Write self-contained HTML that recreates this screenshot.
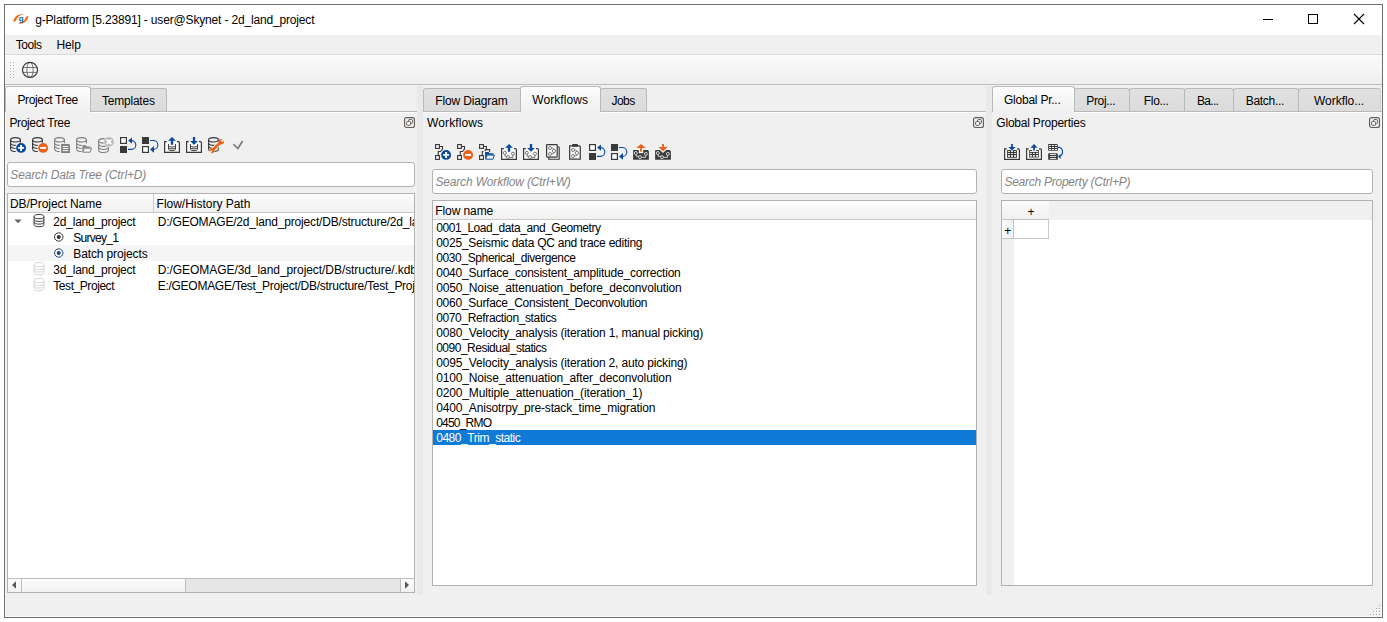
<!DOCTYPE html>
<html><head><meta charset="utf-8"><title>g-Platform</title>
<style>
html,body{margin:0;padding:0;background:#fff;}
body{width:1387px;height:622px;position:relative;overflow:hidden;font-family:'Liberation Sans',sans-serif;font-size:12px;}
.a{position:absolute;box-sizing:border-box;}
.t{position:absolute;white-space:pre;line-height:14px;font-size:12px;}
#win{left:4px;top:4px;width:1379px;height:614px;border:1px solid #707070;background:#f0f0f0;}
#title{left:5px;top:5px;width:1377px;height:30px;background:#fff;}
#menubar{left:5px;top:35px;width:1377px;height:20px;background:#f0f0f0;border-bottom:1px solid #dadada;}
#toolbar{left:5px;top:55px;width:1377px;height:30px;background:linear-gradient(#fbfbfb,#efefef);border-bottom:1px solid #bdbdbd;}
.pane-line{height:1px;background:#b9b9b9;}
.tab{border:1px solid #b9b9b9;border-bottom:none;border-radius:3px 3px 0 0;background:linear-gradient(#e1e1e1,#dbdbdb);}
.tab.sel{background:linear-gradient(#fcfcfc,#f0f0f0);}
.split{background:#e9e9e9;}
.edit{border:1px solid #b2b2b2;border-radius:3px;background:#fff;}
.view{border:1px solid #b2b2b2;background:#fff;}
.hdr{background:linear-gradient(#fdfdfd,#f0f0f0);border-bottom:1px solid #c9c9c9;}
.pane-hl{height:1px;background:#fdfdfd;}
.sbtn{background:linear-gradient(#fdfdfd,#f1f1f1);}
svg{position:absolute;overflow:visible;}

</style></head><body>
<div id="win" class="a"></div>
<div id="title" class="a"></div>
<div id="menubar" class="a"></div>
<div id="toolbar" class="a"></div>

<!-- window controls -->
<svg style="left:1258px;top:9px" width="120" height="20" viewBox="0 0 120 20">
 <path d="M5 10.5H15" stroke="#000" stroke-width="1" fill="none"/>
 <rect x="50.5" y="5.5" width="9" height="9" stroke="#000" stroke-width="1" fill="none"/>
 <path d="M96 5L106 15M106 5L96 15" stroke="#000" stroke-width="1.1" fill="none"/>
</svg>

<!-- inner light edges -->
<div class="a" style="left:5px;top:112px;width:1px;height:505px;background:#f7f7f7"></div>
<div class="a" style="left:1381px;top:112px;width:1px;height:505px;background:#f7f7f7"></div>
<div class="a" style="left:5px;top:616px;width:1377px;height:1px;background:#f7f7f7"></div>
<!-- splitters -->
<div class="a split" style="left:417px;top:86px;width:6px;height:509px"></div>
<div class="a split" style="left:986px;top:86px;width:6px;height:509px"></div>

<!-- LEFT PANEL -->
<div class="a pane-line" style="left:5px;top:111px;width:412px"></div>
<div class="a pane-hl" style="left:90px;top:112px;width:327px"></div>
<div class="a tab" style="left:90px;top:88px;width:77px;height:23px"></div>
<div class="a tab sel" style="left:5px;top:86px;width:86px;height:26px"></div>
<div class="a edit" style="left:7px;top:162px;width:408px;height:25px"></div>
<div class="a view" style="left:7px;top:193px;width:408px;height:400px"></div>
<div class="a hdr" style="left:8px;top:194px;width:406px;height:19px"></div>
<div class="a" style="left:153px;top:194px;width:1px;height:18px;background:#cfcfcf"></div>
<div class="a" style="left:8px;top:245px;width:406px;height:16px;background:#f5f5f5"></div>
<!-- hscroll -->
<div class="a" style="left:8px;top:578px;width:406px;height:14px;background:#e6e6e6;border-top:1px solid #bdbdbd"></div>
<div class="a sbtn" style="left:8px;top:579px;width:14px;height:13px;border-right:1px solid #bdbdbd"></div>
<div class="a sbtn" style="left:21px;top:579px;width:165px;height:13px;border-left:1px solid #bdbdbd;border-right:1px solid #bdbdbd"></div>
<div class="a sbtn" style="left:400px;top:579px;width:14px;height:13px;border-left:1px solid #bdbdbd"></div>
<svg style="left:11px;top:581px" width="6" height="8" viewBox="0 0 6 8"><path d="M1 4L5 0.3V7.7Z" fill="#5a5a5a"/></svg>
<svg style="left:404px;top:581px" width="6" height="8" viewBox="0 0 6 8"><path d="M5 4L1 0.3V7.7Z" fill="#5a5a5a"/></svg>

<!-- MIDDLE PANEL -->
<div class="a pane-line" style="left:423px;top:111px;width:563px"></div>
<div class="a pane-hl" style="left:423px;top:112px;width:98px"></div>
<div class="a pane-hl" style="left:601px;top:112px;width:385px"></div>
<div class="a tab" style="left:423px;top:88px;width:99px;height:23px"></div>
<div class="a tab" style="left:600px;top:88px;width:47px;height:23px"></div>
<div class="a tab sel" style="left:520px;top:86px;width:81px;height:26px"></div>
<div class="a edit" style="left:432px;top:169px;width:545px;height:25px"></div>
<div class="a view" style="left:432px;top:200px;width:545px;height:386px"></div>
<div class="a hdr" style="left:433px;top:201px;width:543px;height:19px"></div>
<div class="a" style="left:433px;top:430px;width:543px;height:15px;background:#0f7bd7"></div>

<!-- RIGHT PANEL -->
<div class="a pane-line" style="left:992px;top:111px;width:390px"></div>
<div class="a pane-hl" style="left:1075px;top:112px;width:307px"></div>
<div class="a tab" style="left:1074px;top:88px;width:56px;height:23px"></div>
<div class="a tab" style="left:1129px;top:88px;width:56px;height:23px"></div>
<div class="a tab" style="left:1184px;top:88px;width:50px;height:23px"></div>
<div class="a tab" style="left:1233px;top:88px;width:66px;height:23px"></div>
<div class="a tab" style="left:1298px;top:88px;width:83px;height:23px;border-right-color:#d2d2d2"></div>
<div class="a tab sel" style="left:992px;top:86px;width:83px;height:26px"></div>
<div class="a edit" style="left:1001px;top:169px;width:372px;height:25px"></div>
<div class="a view" style="left:1001px;top:200px;width:372px;height:386px"></div>
<div class="a" style="left:1002px;top:201px;width:370px;height:19px;background:#f0f0f0"></div>
<div class="a" style="left:1002px;top:201px;width:47px;height:19px;background:linear-gradient(#fbfbfb,#f0f0f0);border-bottom:1px solid #c2c2c2"></div>
<div class="a" style="left:1002px;top:220px;width:12px;height:365px;background:#f0f0f0"></div>
<div class="a" style="left:1002px;top:220px;width:12px;height:19px;background:linear-gradient(90deg,#fbfbfb,#f0f0f0);border-right:1px solid #c2c2c2;border-bottom:1px solid #c2c2c2"></div>
<div class="a" style="left:1014px;top:220px;width:35px;height:19px;background:#fff;border-right:1px solid #c8c8c8;border-bottom:1px solid #c8c8c8"></div>

<!-- float buttons -->
<svg style="left:404px;top:117px" width="11" height="11" viewBox="0 0 11 11"><rect x="0.55" y="0.55" width="9.9" height="9.9" rx="2" fill="none" stroke="#625e5a" stroke-width="1.15"/><rect x="4.5" y="2.5" width="4" height="4" rx="1.2" fill="none" stroke="#625e5a" stroke-width="1"/><rect x="2.6" y="4.4" width="4" height="4" rx="1.2" fill="#f6f6f6" stroke="#625e5a" stroke-width="1"/></svg>
<svg style="left:973px;top:117px" width="11" height="11" viewBox="0 0 11 11"><rect x="0.55" y="0.55" width="9.9" height="9.9" rx="2" fill="none" stroke="#625e5a" stroke-width="1.15"/><rect x="4.5" y="2.5" width="4" height="4" rx="1.2" fill="none" stroke="#625e5a" stroke-width="1"/><rect x="2.6" y="4.4" width="4" height="4" rx="1.2" fill="#f6f6f6" stroke="#625e5a" stroke-width="1"/></svg>
<svg style="left:1369px;top:117px" width="11" height="11" viewBox="0 0 11 11"><rect x="0.55" y="0.55" width="9.9" height="9.9" rx="2" fill="none" stroke="#625e5a" stroke-width="1.15"/><rect x="4.5" y="2.5" width="4" height="4" rx="1.2" fill="none" stroke="#625e5a" stroke-width="1"/><rect x="2.6" y="4.4" width="4" height="4" rx="1.2" fill="#f6f6f6" stroke="#625e5a" stroke-width="1"/></svg>

<!-- size grip -->
<svg style="left:1370px;top:605px" width="11" height="11" viewBox="0 0 11 11" shape-rendering="crispEdges"><g fill="#a6a6a6"><rect x="9" y="0" width="1" height="1"/><rect x="6" y="3" width="1" height="1"/><rect x="9" y="3" width="1" height="1"/><rect x="3" y="6" width="1" height="1"/><rect x="6" y="6" width="1" height="1"/><rect x="9" y="6" width="1" height="1"/><rect x="0" y="9" width="1" height="1"/><rect x="3" y="9" width="1" height="1"/><rect x="6" y="9" width="1" height="1"/><rect x="9" y="9" width="1" height="1"/></g><g fill="#fff"><rect x="10" y="1" width="1" height="1"/><rect x="7" y="4" width="1" height="1"/><rect x="10" y="4" width="1" height="1"/><rect x="4" y="7" width="1" height="1"/><rect x="7" y="7" width="1" height="1"/><rect x="10" y="7" width="1" height="1"/><rect x="1" y="10" width="1" height="1"/><rect x="4" y="10" width="1" height="1"/><rect x="7" y="10" width="1" height="1"/><rect x="10" y="10" width="1" height="1"/></g></svg>
<svg style="left:10px;top:137px" width="16" height="16" viewBox="0 0 16 16"><g fill="none" stroke="#3a3a3a" stroke-width="1.1"><ellipse cx="5.5" cy="2.85" rx="4.9" ry="2.2"/><path d="M0.6 2.85V12.35"/><path d="M10.4 2.85V6.4"/><path d="M0.6 6.15A4.9 2.2 0 0 0 5.7 8.350000000000001"/><path d="M0.6 9.25A4.9 2.2 0 0 0 5.7 11.45"/><path d="M0.6 12.35A4.9 2.2 0 0 0 5.7 14.55"/></g><circle cx="11.1" cy="10.9" r="5.5" fill="#f0f0f0"/><circle cx="11.1" cy="10.9" r="4.95" fill="#0a4b9c"/><path d="M8.1 10.9H14.1M11.1 7.9V13.9" stroke="#fff" stroke-width="1.9"/></svg>
<svg style="left:32px;top:137px" width="16" height="16" viewBox="0 0 16 16"><g fill="none" stroke="#3a3a3a" stroke-width="1.1"><ellipse cx="5.5" cy="2.85" rx="4.9" ry="2.2"/><path d="M0.6 2.85V12.35"/><path d="M10.4 2.85V6.4"/><path d="M0.6 6.15A4.9 2.2 0 0 0 5.7 8.350000000000001"/><path d="M0.6 9.25A4.9 2.2 0 0 0 5.7 11.45"/><path d="M0.6 12.35A4.9 2.2 0 0 0 5.7 14.55"/></g><circle cx="11.1" cy="10.9" r="5.5" fill="#f0f0f0"/><circle cx="11.1" cy="10.9" r="4.95" fill="#e8641a"/><path d="M8.1 10.9H14.1" stroke="#fff" stroke-width="1.9"/></svg>
<svg style="left:54px;top:137px" width="16" height="16" viewBox="0 0 16 16"><g fill="none" stroke="#808080" stroke-width="1.1"><ellipse cx="5.5" cy="2.85" rx="4.9" ry="2.2"/><path d="M0.6 2.85V12.35"/><path d="M10.4 2.85V6.4"/><path d="M0.6 6.15A4.9 2.2 0 0 0 5.7 8.350000000000001"/><path d="M0.6 9.25A4.9 2.2 0 0 0 5.7 11.45"/><path d="M0.6 12.35A4.9 2.2 0 0 0 5.7 14.55"/></g><path d="M6.6 6.6H15.2L16.5 7.9V16.4H6.6Z" fill="#f0f0f0"/><path d="M7.1 7.1H14.9L16 8.2V15.9H7.1Z" fill="#7f7f7f"/><path d="M8.8 9.5H14.3M8.8 11.5H14.3M8.8 13.6H14.3" stroke="#fff" stroke-width="1"/></svg>
<svg style="left:76px;top:137px" width="16" height="16" viewBox="0 0 16 16"><g fill="none" stroke="#808080" stroke-width="1.1"><ellipse cx="5.5" cy="2.85" rx="4.9" ry="2.2"/><path d="M0.6 2.85V12.35"/><path d="M10.4 2.85V6.4"/><path d="M0.6 6.15A4.9 2.2 0 0 0 5.7 8.350000000000001"/><path d="M0.6 9.25A4.9 2.2 0 0 0 5.7 11.45"/><path d="M0.6 12.35A4.9 2.2 0 0 0 5.7 14.55"/></g><path d="M5.9 16.2V7.7H10.2L11.2 8.9H14.9V10.3H16.6L14.8 16.2Z" fill="#f0f0f0"/><path d="M6.4 15.7V8.2H9.8L10.8 9.4H14.4V10.8H8L6.4 15.7Z" fill="#808080"/><path d="M8.2 11.2H15.5L14.1 15.2H6.9Z" fill="#f4f4f4" stroke="#808080" stroke-width="1"/></svg>
<svg style="left:98px;top:137px" width="16" height="16" viewBox="0 0 16 16"><g fill="none" stroke="#808080" stroke-width="1.1"><ellipse cx="5.5" cy="3.85" rx="4.9" ry="2.2"/><path d="M0.6 3.85V13.35"/><path d="M10.4 3.85V13.35"/><path d="M0.6 7.15A4.9 2.2 0 0 0 10.4 7.15"/><path d="M0.6 10.25A4.9 2.2 0 0 0 10.4 10.25"/><path d="M0.6 13.35A4.9 2.2 0 0 0 10.4 13.35"/></g><circle cx="11" cy="4.9" r="5.4" fill="#f0f0f0"/><circle cx="11" cy="4.9" r="4.9" fill="#bdbdbd"/><path d="M8.7 2.6L13.3 7.2M13.3 2.6L8.7 7.2" stroke="#fff" stroke-width="1.8"/></svg>
<svg style="left:120px;top:137px" width="16" height="16" viewBox="0 0 16 16"><rect x="0.6" y="0.6" width="5.8" height="5.8" fill="#fff" stroke="#3a3a3a" stroke-width="1.2"/><rect x="0" y="9" width="7" height="7" fill="#3a3a3a"/><path d="M8 12.4H11.4A4.4 4.4 0 0 0 11.4 3.6H11" fill="none" stroke="#0a4b9c" stroke-width="1.1"/><path d="M8.1 3.6L12 0.4V6.8Z" fill="#0a4b9c"/></svg>
<svg style="left:142px;top:137px" width="16" height="16" viewBox="0 0 16 16"><rect x="0" y="0" width="7" height="7" fill="#3a3a3a"/><rect x="0.6" y="9.6" width="5.8" height="5.8" fill="#fff" stroke="#3a3a3a" stroke-width="1.2"/><path d="M8 3.5H11.4A4.45 4.45 0 0 1 11.4 12.4H11" fill="none" stroke="#0a4b9c" stroke-width="1.1"/><path d="M8.1 12.4L12 9.1V15.8Z" fill="#0a4b9c"/></svg>
<svg style="left:164px;top:137px" width="16" height="16" viewBox="0 0 16 16"><rect x="0.6" y="4.6" width="14.8" height="10.8" fill="#f8f8f8"/><path d="M2.8 4.6H0.6V15.4H15.4V5.6Q15.4 4.6 14.4 4.6H13" fill="none" stroke="#3a3a3a" stroke-width="1.2"/><g fill="none" stroke="#444" stroke-width="1"><path d="M4.5 7V12.2M11.5 7V12.2"/><path d="M4.5 8.6A3.5 1.5 0 0 0 11.5 8.6"/><path d="M4.5 10.4A3.5 1.5 0 0 0 11.5 10.4"/><path d="M4.5 12.2A3.5 1.5 0 0 0 11.5 12.2"/></g><path d="M8 -0.8L3.4000000000000004 4.2H6.3V8.3H9.7V4.2H12.6Z" fill="#f0f0f0"/><path d="M8 0L4.1 3.8H6.85V7.8H9.15V3.8H11.9Z" fill="#0a4b9c"/></svg>
<svg style="left:186px;top:137px" width="16" height="16" viewBox="0 0 16 16"><rect x="0.6" y="4.6" width="14.8" height="10.8" fill="#f8f8f8"/><path d="M2.8 4.6H0.6V15.4H15.4V5.6Q15.4 4.6 14.4 4.6H13" fill="none" stroke="#3a3a3a" stroke-width="1.2"/><g fill="none" stroke="#444" stroke-width="1"><path d="M4.5 7V12.2M11.5 7V12.2"/><path d="M4.5 8.6A3.5 1.5 0 0 0 11.5 8.6"/><path d="M4.5 10.4A3.5 1.5 0 0 0 11.5 10.4"/><path d="M4.5 12.2A3.5 1.5 0 0 0 11.5 12.2"/></g><path d="M6.3 -0.5V3.4H3.2L8 8.6L12.8 3.4H9.7V-0.5Z" fill="#f0f0f0"/><path d="M6.85 0V3.9H4.1L8 7.8L11.9 3.9H9.15V0Z" fill="#0a4b9c"/></svg>
<svg style="left:208px;top:137px" width="16" height="16" viewBox="0 0 16 16"><g fill="none" stroke="#3a3a3a" stroke-width="1.1"><ellipse cx="5.5" cy="2.85" rx="4.9" ry="2.2"/><path d="M0.6 2.85V12.35"/><path d="M10.4 2.85V12.35"/><path d="M0.6 6.15A4.9 2.2 0 0 0 10.4 6.15"/><path d="M0.6 9.25A4.9 2.2 0 0 0 10.4 9.25"/><path d="M0.6 12.35A4.9 2.2 0 0 0 10.4 12.35"/></g><path d="M3.2 14.4L13.6 4.4" stroke="#f0f0f0" stroke-width="4.6" stroke-linecap="round"/><path d="M4 13.6L13 5" stroke="#e8641a" stroke-width="2.7"/><circle cx="13.1" cy="4.8" r="2.7" fill="#e8641a"/><circle cx="3.9" cy="13.6" r="2.6" fill="#e8641a"/><path d="M13.4 4.4L16.5 1.4" stroke="#f0f0f0" stroke-width="2"/><path d="M3.6 13.9L1 16.5" stroke="#f0f0f0" stroke-width="1.7"/></svg>
<svg style="left:232px;top:137px" width="16" height="16" viewBox="0 0 16 16"><path d="M1.4 7.2L5.9 11.5L10.6 4" fill="none" stroke="#7d7d7d" stroke-width="1.7"/></svg>
<svg style="left:435px;top:144px" width="16" height="16" viewBox="0 0 16 16"><g fill="none" stroke="#3a3a3a" stroke-width="1.15"><rect x="0.6" y="0.6" width="3.8" height="3.8" fill="#fff"/><rect x="0.6" y="11.6" width="3.8" height="3.8" fill="#fff"/><path d="M4.4 2.5H7.5V5L5.6 7.5H3.3V11.4"/></g><circle cx="11.1" cy="10.9" r="5.5" fill="#f0f0f0"/><circle cx="11.1" cy="10.9" r="4.95" fill="#0a4b9c"/><path d="M8.1 10.9H14.1M11.1 7.9V13.9" stroke="#fff" stroke-width="1.9"/></svg>
<svg style="left:457px;top:144px" width="16" height="16" viewBox="0 0 16 16"><g fill="none" stroke="#3a3a3a" stroke-width="1.15"><rect x="0.6" y="0.6" width="3.8" height="3.8" fill="#fff"/><rect x="0.6" y="11.6" width="3.8" height="3.8" fill="#fff"/><path d="M4.4 2.5H7.5V5L5.6 7.5H3.3V11.4"/></g><circle cx="11.1" cy="10.9" r="5.5" fill="#f0f0f0"/><circle cx="11.1" cy="10.9" r="4.95" fill="#e8641a"/><path d="M8.1 10.9H14.1" stroke="#fff" stroke-width="1.9"/></svg>
<svg style="left:479px;top:144px" width="16" height="16" viewBox="0 0 16 16"><g fill="none" stroke="#3a3a3a" stroke-width="1.15"><rect x="0.6" y="0.6" width="3.8" height="3.8" fill="#fff"/><rect x="0.6" y="11.6" width="3.8" height="3.8" fill="#fff"/><path d="M4.4 2.5H7.4V5.4M6.3 7.2V5.6H10.6V8M4.4 7.5H3.3V11.4"/></g><path d="M5.6 16.2V7.6H9.9L10.9 8.8H14.9V10.2H16.6L14.9 16.2Z" fill="#f0f0f0"/><path d="M6.1 15.7V8.1H9.6L10.6 9.3H14.5V10.7H8L6.1 15.7Z" fill="#0a4b9c"/><path d="M8.1 11.1H15.4L13.9 15.2H6.7Z" fill="#f4f4f4" stroke="#0a4b9c" stroke-width="1"/></svg>
<svg style="left:501px;top:144px" width="16" height="16" viewBox="0 0 16 16"><rect x="0.6" y="4.6" width="14.8" height="10.8" fill="#f8f8f8"/><path d="M2.8 4.6H0.6V15.4H15.4V5.6Q15.4 4.6 14.4 4.6H13" fill="none" stroke="#3a3a3a" stroke-width="1.2"/><g fill="none" stroke="#606060" stroke-width="0.85"><path d="M4.1 10.35V12.2H5.6M8.5 13.4H11.9V11.2"/><circle cx="3.8" cy="8.85" r="1.5" fill="#fff"/><circle cx="12" cy="9.7" r="1.5" fill="#fff"/><circle cx="7" cy="13.1" r="1.5" fill="#fff"/></g><path d="M8 -0.8L3.4000000000000004 4.2H6.3V8.3H9.7V4.2H12.6Z" fill="#f0f0f0"/><path d="M8 0L4.1 3.8H6.85V7.8H9.15V3.8H11.9Z" fill="#0a4b9c"/></svg>
<svg style="left:523px;top:144px" width="16" height="16" viewBox="0 0 16 16"><rect x="0.6" y="4.6" width="14.8" height="10.8" fill="#f8f8f8"/><path d="M2.8 4.6H0.6V15.4H15.4V5.6Q15.4 4.6 14.4 4.6H13" fill="none" stroke="#3a3a3a" stroke-width="1.2"/><g fill="none" stroke="#606060" stroke-width="0.85"><path d="M4.1 10.35V12.2H5.6M8.5 13.4H11.9V11.2"/><circle cx="3.8" cy="8.85" r="1.5" fill="#fff"/><circle cx="12" cy="9.7" r="1.5" fill="#fff"/><circle cx="7" cy="13.1" r="1.5" fill="#fff"/></g><path d="M6.3 -0.5V3.4H3.2L8 8.6L12.8 3.4H9.7V-0.5Z" fill="#f0f0f0"/><path d="M6.85 0V3.9H4.1L8 7.8L11.9 3.9H9.15V0Z" fill="#0a4b9c"/></svg>
<svg style="left:545px;top:144px" width="16" height="16" viewBox="0 0 16 16"><path d="M3.7 13.6V15.25H14.2V3.8Q14.2 2.6 12.7 2.5" fill="none" stroke="#3a3a3a" stroke-width="1.15"/><rect x="1.6" y="0.6" width="10.6" height="12.5" rx="0.5" fill="#f6f6f6" stroke="#3a3a3a" stroke-width="1.2"/><g fill="none" stroke="#5a5a5a" stroke-width="0.75"><path d="M6.5 4.1H7.6Q8.9 4.3 8.9 5.5M6.5 9.9H7.6Q8.9 9.7 8.9 8.5"/><circle cx="5" cy="4" r="1.5" fill="#fff"/><circle cx="8.9" cy="7" r="1.6" fill="#fff"/><circle cx="5" cy="10" r="1.5" fill="#fff"/></g></svg>
<svg style="left:567px;top:144px" width="16" height="16" viewBox="0 0 16 16"><path d="M2.65 1.8H12.3Q13.3 1.8 13.3 2.8V15.15H2.65Z" fill="#f4f4f4" stroke="#3a3a3a" stroke-width="1.2"/><rect x="5.1" y="0.1" width="5.7" height="2.6" rx="0.5" fill="#3a3a3a"/><g fill="none" stroke="#5a5a5a" stroke-width="0.75"><path d="M7.5 6.1H8.6Q9.9 6.3 9.9 7.5M7.5 11.9H8.6Q9.9 11.7 9.9 10.5"/><circle cx="6" cy="6" r="1.5" fill="#fff"/><circle cx="9.9" cy="9" r="1.6" fill="#fff"/><circle cx="6" cy="12" r="1.5" fill="#fff"/></g></svg>
<svg style="left:589px;top:144px" width="16" height="16" viewBox="0 0 16 16"><rect x="0.6" y="0.6" width="5.8" height="5.8" fill="#fff" stroke="#3a3a3a" stroke-width="1.2"/><rect x="0" y="9" width="7" height="7" fill="#3a3a3a"/><path d="M8 12.4H11.4A4.4 4.4 0 0 0 11.4 3.6H11" fill="none" stroke="#0a4b9c" stroke-width="1.1"/><path d="M8.1 3.6L12 0.4V6.8Z" fill="#0a4b9c"/></svg>
<svg style="left:611px;top:144px" width="16" height="16" viewBox="0 0 16 16"><rect x="0" y="0" width="7" height="7" fill="#3a3a3a"/><rect x="0.6" y="9.6" width="5.8" height="5.8" fill="#fff" stroke="#3a3a3a" stroke-width="1.2"/><path d="M8 3.5H11.4A4.45 4.45 0 0 1 11.4 12.4H11" fill="none" stroke="#0a4b9c" stroke-width="1.1"/><path d="M8.1 12.4L12 9.1V15.8Z" fill="#0a4b9c"/></svg>
<svg style="left:633px;top:144px" width="16" height="16" viewBox="0 0 16 16"><path d="M0.1 6.1H14.8L15.9 7.2V15.75H0.1Z" fill="#3a3a3a" stroke="#fff" stroke-width="0.9" paint-order="stroke"/><g fill="none" stroke="#e4e4e4" stroke-width="0.9"><path d="M3.2 10.4V12.3H5.5M8.5 13.3H12.6V11.4"/><circle cx="2.84" cy="9.0" r="1.5" fill="#3a3a3a"/><circle cx="12.9" cy="9.9" r="1.5" fill="#3a3a3a"/><circle cx="7" cy="13.1" r="1.5" fill="#3a3a3a"/></g><path d="M5.8 5.4H10.2V9.2H5.8Z" fill="#fff"/><path d="M7.97 -0.9L2.4 4.7H6.4V8.4H9.5V4.7H13.6Z" fill="#f0f0f0"/><path d="M7.97 0L3.2 3.9H7.08V7.8H8.85V3.9H12.75Z" fill="#e8641a"/></svg>
<svg style="left:655px;top:144px" width="16" height="16" viewBox="0 0 16 16"><path d="M0.1 6.1H14.8L15.9 7.2V15.75H0.1Z" fill="#3a3a3a" stroke="#fff" stroke-width="0.9" paint-order="stroke"/><g fill="none" stroke="#e4e4e4" stroke-width="0.9"><path d="M3.2 10.4V12.3H5.5M8.5 13.3H12.6V11.4"/><circle cx="2.84" cy="9.0" r="1.5" fill="#3a3a3a"/><circle cx="12.9" cy="9.9" r="1.5" fill="#3a3a3a"/><circle cx="7" cy="13.1" r="1.5" fill="#3a3a3a"/></g><path d="M4.4 5.4H11.6L8 9Z" fill="#fff"/><path d="M6.4 -0.5V2.4H2.2L8 8.2L13.8 2.4H9.6V-0.5Z" fill="#f0f0f0"/><path d="M7.05 0.1V3H3.3L8 7.26L12.7 3H8.95V0.1Z" fill="#e8641a"/></svg>
<svg style="left:1004px;top:144px" width="16" height="16" viewBox="0 0 16 16"><rect x="0.6" y="4.85" width="14.8" height="10.55" fill="#f8f8f8"/><path d="M2.8 4.85H0.6V15.4H15.4V5.85Q15.4 4.85 14.4 4.85H13" fill="none" stroke="#3a3a3a" stroke-width="1.2"/><rect x="3.07" y="6.1" width="9.83" height="7.6" rx="0.5" fill="#3a3a3a"/><rect x="4.05" y="7.1" width="1.85" height="0.90" fill="#fff"/><rect x="4.05" y="9" width="1.85" height="0.90" fill="#fff"/><rect x="4.05" y="11.15" width="1.85" height="1.70" fill="#fff"/><rect x="7" y="7.1" width="1.90" height="0.90" fill="#fff"/><rect x="7" y="9" width="1.90" height="0.90" fill="#fff"/><rect x="7" y="11.15" width="1.90" height="1.70" fill="#fff"/><rect x="10.1" y="7.1" width="1.90" height="0.90" fill="#fff"/><rect x="10.1" y="9" width="1.90" height="0.90" fill="#fff"/><rect x="10.1" y="11.15" width="1.90" height="1.70" fill="#fff"/><path d="M6.4 -0.5V2.6H3.4L8 7.4L12.6 2.6H9.6V-0.5Z" fill="#f0f0f0"/><path d="M7.1 0V3.1H4.3L8 6.55L11.7 3.1H8.9V0Z" fill="#0a4b9c"/></svg>
<svg style="left:1026px;top:144px" width="16" height="16" viewBox="0 0 16 16"><rect x="0.6" y="4.85" width="14.8" height="10.55" fill="#f8f8f8"/><path d="M2.8 4.85H0.6V15.4H15.4V5.85Q15.4 4.85 14.4 4.85H13" fill="none" stroke="#3a3a3a" stroke-width="1.2"/><rect x="3.2" y="6.1" width="9.6" height="7.5" rx="0.5" fill="#3a3a3a"/><rect x="4.0" y="7.1" width="8.00" height="0.90" fill="#fff"/><rect x="4.0" y="8.9" width="1.85" height="1.00" fill="#fff"/><rect x="4.0" y="11.1" width="1.85" height="1.60" fill="#fff"/><rect x="7" y="8.9" width="1.90" height="1.00" fill="#fff"/><rect x="7" y="11.1" width="1.90" height="1.60" fill="#fff"/><rect x="10.0" y="8.9" width="2.00" height="1.00" fill="#fff"/><rect x="10.0" y="11.1" width="2.00" height="1.60" fill="#fff"/><rect x="5.9" y="5.5" width="4.2" height="1.7" fill="#f0f0f0"/><path d="M8 -0.9L3.3 4.4H6.4V7.2H9.6V4.4H12.7Z" fill="#f0f0f0"/><path d="M8 0L4.4 3.7H7.1V6.55H8.9V3.7H11.6Z" fill="#0a4b9c"/></svg>
<svg style="left:1048px;top:144px" width="16" height="16" viewBox="0 0 16 16"><path d="M0.2 0.1H9L9.9 1V6.7H0.2Z" fill="#3a3a3a"/><rect x="1" y="1.1" width="2.10" height="0.90" fill="#fff"/><rect x="1" y="3.1" width="2.10" height="0.90" fill="#fff"/><rect x="1" y="5.1" width="2.10" height="0.90" fill="#fff"/><rect x="4" y="1.1" width="2.10" height="0.90" fill="#fff"/><rect x="4" y="3.1" width="2.10" height="0.90" fill="#fff"/><rect x="4" y="5.1" width="2.10" height="0.90" fill="#fff"/><rect x="7" y="1.1" width="2.10" height="0.90" fill="#fff"/><rect x="7" y="3.1" width="2.10" height="0.90" fill="#fff"/><rect x="7" y="5.1" width="2.10" height="0.90" fill="#fff"/><path d="M0.2 9.2H9L9.9 10.1V15.75H0.2Z" fill="#3a3a3a"/><rect x="2.05" y="10.15" width="6.05" height="0.85" fill="#fff"/><rect x="2.05" y="12.2" width="6.05" height="0.80" fill="#fff"/><rect x="2.05" y="14.15" width="6.05" height="0.85" fill="#fff"/><path d="M9.9 3.4H12A3.6 4.6 0 0 1 12.4 12" fill="none" stroke="#0a4b9c" stroke-width="1.1"/><path d="M10 12.4L12.7 10L12.7 14.9Z" fill="#0a4b9c"/></svg>
<svg style="left:21px;top:61px" width="18" height="18" viewBox="0 0 18 18"><g fill="none" stroke="#3c3c3c"><ellipse cx="9" cy="8.95" rx="3.2" ry="7.5" stroke-width="0.75" stroke="#555"/><path d="M2.1 6.5H15.9M2.1 11.4H15.9" stroke-width="0.8" stroke="#5a5a5a"/><circle cx="9" cy="8.95" r="7.5" stroke-width="1.2"/></g></svg>
<svg style="left:33px;top:214px" width="12" height="14" viewBox="0 0 12 14"><g fill="none" stroke="#333" stroke-width="0.95"><ellipse cx="6" cy="2.6" rx="4.9" ry="2.1"/><path d="M1.1 2.6V10.6M10.9 2.6V10.6"/><path d="M1.1 5.3A4.9 2.1 0 0 0 10.9 5.3"/><path d="M1.1 8A4.9 2.1 0 0 0 10.9 8"/><path d="M1.1 10.6A4.9 2.1 0 0 0 10.9 10.6"/></g></svg>
<svg style="left:33px;top:262px" width="12" height="14" viewBox="0 0 12 14"><g fill="none" stroke="#d4d4d4" stroke-width="0.95"><ellipse cx="6" cy="2.6" rx="4.9" ry="2.1"/><path d="M1.1 2.6V10.6M10.9 2.6V10.6"/><path d="M1.1 5.3A4.9 2.1 0 0 0 10.9 5.3"/><path d="M1.1 8A4.9 2.1 0 0 0 10.9 8"/><path d="M1.1 10.6A4.9 2.1 0 0 0 10.9 10.6"/></g></svg>
<svg style="left:33px;top:278px" width="12" height="14" viewBox="0 0 12 14"><g fill="none" stroke="#d4d4d4" stroke-width="0.95"><ellipse cx="6" cy="2.6" rx="4.9" ry="2.1"/><path d="M1.1 2.6V10.6M10.9 2.6V10.6"/><path d="M1.1 5.3A4.9 2.1 0 0 0 10.9 5.3"/><path d="M1.1 8A4.9 2.1 0 0 0 10.9 8"/><path d="M1.1 10.6A4.9 2.1 0 0 0 10.9 10.6"/></g></svg>
<svg style="left:53px;top:231px" width="12" height="12" viewBox="0 0 12 12"><circle cx="5.75" cy="6.0" r="4.2" fill="none" stroke="#333" stroke-width="1"/><circle cx="5.75" cy="6.0" r="2" fill="#333"/></svg>
<svg style="left:53px;top:247px" width="12" height="12" viewBox="0 0 12 12"><circle cx="5.75" cy="6.0" r="4.2" fill="none" stroke="#1f4a78" stroke-width="1"/><circle cx="5.75" cy="6.0" r="2" fill="#1f4a78"/></svg>
<svg style="left:14px;top:219px" width="8" height="5" viewBox="0 0 8 5"><path d="M0.3 0.4H7.7L4 4.2Z" fill="#666"/></svg>
<svg style="left:10px;top:62px" width="4" height="16" viewBox="0 0 4 16"><rect x="0" y="0" width="1" height="1" fill="#b4b4b4"/><rect x="0" y="3" width="1" height="1" fill="#b4b4b4"/><rect x="0" y="6" width="1" height="1" fill="#b4b4b4"/><rect x="0" y="9" width="1" height="1" fill="#b4b4b4"/><rect x="0" y="12" width="1" height="1" fill="#b4b4b4"/><rect x="0" y="15" width="1" height="1" fill="#b4b4b4"/><rect x="3" y="0" width="1" height="1" fill="#b4b4b4"/><rect x="3" y="3" width="1" height="1" fill="#b4b4b4"/><rect x="3" y="6" width="1" height="1" fill="#b4b4b4"/><rect x="3" y="9" width="1" height="1" fill="#b4b4b4"/><rect x="3" y="12" width="1" height="1" fill="#b4b4b4"/><rect x="3" y="15" width="1" height="1" fill="#b4b4b4"/></svg>
<svg style="left:13px;top:12px" width="16" height="14" viewBox="0 0 16 14"><path d="M0.5 10C0.6 5.2 4.6 1.4 11.2 2C7 2.8 4.2 5 2.9 8.9Z" fill="#f26a12"/><path d="M15.3 3.8C15.2 8.8 11 12.4 4.2 11.8C8.6 11.2 11.6 8.8 13 4.9Z" fill="#f26a12"/><text x="5.7" y="8.5" font-family="'Liberation Sans',sans-serif" font-weight="bold" font-size="8" fill="#0d62ab">g</text></svg>
<div id="texts">
<span class="t" style="left:35.2px;top:12.8px;color:#000;letter-spacing:-0.163px;">g-Platform [5.23891] - user@Skynet - 2d_land_project</span>
<span class="t" style="left:15.7px;top:37.8px;color:#000;letter-spacing:-0.403px;">Tools</span>
<span class="t" style="left:56.4px;top:37.8px;color:#000;letter-spacing:-0.054px;">Help</span>
<span class="t" style="left:17.4px;top:92.8px;color:#000;letter-spacing:-0.348px;">Project Tree</span>
<span class="t" style="left:102.0px;top:93.8px;color:#000;letter-spacing:-0.224px;">Templates</span>
<span class="t" style="left:9.4px;top:115.8px;color:#000;letter-spacing:-0.339px;">Project Tree</span>
<span class="t" style="left:10.3px;top:167.8px;color:#848484;letter-spacing:-0.146px;font-style:italic;">Search Data Tree (Ctrl+D)</span>
<span class="t" style="left:10.0px;top:196.8px;color:#000;letter-spacing:-0.062px;">DB/Project Name</span>
<span class="t" style="left:156.6px;top:196.8px;color:#000;letter-spacing:-0.020px;">Flow/History Path</span>
<span class="t" style="left:53.3px;top:214.8px;color:#000;letter-spacing:-0.214px;">2d_land_project</span>
<span class="t" style="left:73.3px;top:230.8px;color:#000;letter-spacing:-0.734px;">Survey_1</span>
<span class="t" style="left:73.3px;top:246.8px;color:#000;letter-spacing:-0.129px;">Batch projects</span>
<span class="t" style="left:53.3px;top:262.8px;color:#000;letter-spacing:-0.214px;">3d_land_project</span>
<span class="t" style="left:53.3px;top:278.8px;color:#000;letter-spacing:-0.438px;">Test_Project</span>
<span class="t" style="left:157.7px;top:214.8px;color:#000;letter-spacing:0.000px;letter-spacing:-0.182px;width:256.3px;overflow:hidden;">D:/GEOMAGE/2d_land_project/DB/structure/2d_land_project.kdb</span>
<span class="t" style="left:157.7px;top:262.8px;color:#000;letter-spacing:0.000px;letter-spacing:-0.065px;width:256.3px;overflow:hidden;">D:/GEOMAGE/3d_land_project/DB/structure/.kdb</span>
<span class="t" style="left:157.7px;top:278.8px;color:#000;letter-spacing:0.000px;letter-spacing:-0.271px;width:256.3px;overflow:hidden;">E:/GEOMAGE/Test_Project/DB/structure/Test_Project.kdb</span>
<span class="t" style="left:1027.6px;top:205.4px;color:#000;letter-spacing:0.000px;">+</span>
<span class="t" style="left:1004.3px;top:223.7px;color:#000;letter-spacing:0.000px;">+</span>
<span class="t" style="left:435.2px;top:93.8px;color:#000;letter-spacing:-0.140px;">Flow Diagram</span>
<span class="t" style="left:532.2px;top:92.8px;color:#000;letter-spacing:0.079px;">Workflows</span>
<span class="t" style="left:611.4px;top:93.8px;color:#000;letter-spacing:-0.474px;">Jobs</span>
<span class="t" style="left:427.1px;top:115.8px;color:#000;letter-spacing:0.091px;">Workflows</span>
<span class="t" style="left:435.4px;top:174.8px;color:#848484;letter-spacing:-0.154px;font-style:italic;">Search Workflow (Ctrl+W)</span>
<span class="t" style="left:435.3px;top:203.8px;color:#000;letter-spacing:-0.093px;">Flow name</span>
<span class="t" style="left:436.2px;top:220.8px;color:#000;letter-spacing:-0.436px;">0001_Load_data_and_Geometry</span>
<span class="t" style="left:436.2px;top:235.8px;color:#000;letter-spacing:-0.247px;">0025_Seismic data QC and trace editing</span>
<span class="t" style="left:436.2px;top:250.8px;color:#000;letter-spacing:-0.375px;">0030_Spherical_divergence</span>
<span class="t" style="left:436.2px;top:265.8px;color:#000;letter-spacing:-0.207px;">0040_Surface_consistent_amplitude_correction</span>
<span class="t" style="left:436.2px;top:280.8px;color:#000;letter-spacing:-0.145px;">0050_Noise_attenuation_before_deconvolution</span>
<span class="t" style="left:436.2px;top:295.8px;color:#000;letter-spacing:-0.264px;">0060_Surface_Consistent_Deconvolution</span>
<span class="t" style="left:436.2px;top:310.8px;color:#000;letter-spacing:-0.371px;">0070_Refraction_statics</span>
<span class="t" style="left:436.2px;top:325.8px;color:#000;letter-spacing:-0.165px;">0080_Velocity_analysis (iteration 1, manual picking)</span>
<span class="t" style="left:436.2px;top:340.8px;color:#000;letter-spacing:-0.500px;">0090_Residual_statics</span>
<span class="t" style="left:436.2px;top:355.8px;color:#000;letter-spacing:-0.168px;">0095_Velocity_analysis (iteration 2, auto picking)</span>
<span class="t" style="left:436.2px;top:370.8px;color:#000;letter-spacing:-0.150px;">0100_Noise_attenuation_after_deconvolution</span>
<span class="t" style="left:436.2px;top:385.8px;color:#000;letter-spacing:-0.137px;">0200_Multiple_attenuation_(iteration_1)</span>
<span class="t" style="left:436.2px;top:400.8px;color:#000;letter-spacing:-0.148px;">0400_Anisotrpy_pre-stack_time_migration</span>
<span class="t" style="left:436.2px;top:415.8px;color:#000;letter-spacing:-0.797px;">0450_RMO</span>
<span class="t" style="left:436.2px;top:430.8px;color:#fff;letter-spacing:-0.464px;">0480_Trim_static</span>
<span class="t" style="left:1004.0px;top:92.8px;color:#000;letter-spacing:-0.233px;">Global Pr...</span>
<span class="t" style="left:1086.2px;top:93.8px;color:#000;letter-spacing:-0.314px;">Proj...</span>
<span class="t" style="left:1143.8px;top:93.8px;color:#000;letter-spacing:-0.322px;">Flo...</span>
<span class="t" style="left:1197.0px;top:93.8px;color:#000;letter-spacing:-0.686px;">Ba...</span>
<span class="t" style="left:1245.7px;top:93.8px;color:#000;letter-spacing:-0.292px;">Batch...</span>
<span class="t" style="left:1314.0px;top:93.8px;color:#000;letter-spacing:-0.028px;">Workflo...</span>
<span class="t" style="left:996.3px;top:115.8px;color:#000;letter-spacing:-0.207px;">Global Properties</span>
<span class="t" style="left:1004.4px;top:174.8px;color:#848484;letter-spacing:-0.248px;font-style:italic;">Search Property (Ctrl+P)</span>
</div>
</body></html>
